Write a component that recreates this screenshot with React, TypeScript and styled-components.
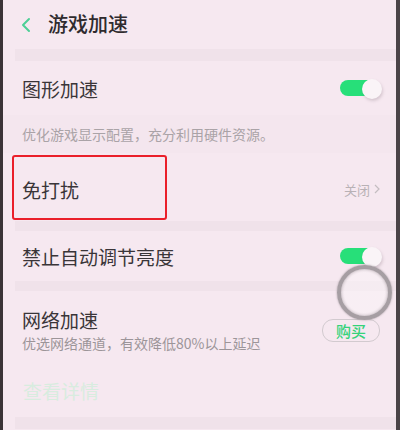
import React from "react";
import styled, { createGlobalStyle } from "styled-components";

const Global = createGlobalStyle`
  html, body { margin: 0; padding: 0; background: #f6e8f0; }
  body { font-family: "Noto Sans CJK SC", "Noto Sans", sans-serif; }
`;

const Screen = styled.div`
  position: relative;
  width: 400px;
  height: 430px;
  box-sizing: border-box;
  overflow: hidden;
  background: #f6e8f0;
  border-left: 3px solid #3b3337;
  border-right: 4px solid #4a4347;
  display: flex;
  flex-direction: column;
`;

const Header = styled.div`
  height: 49px;
  display: flex;
  align-items: center;
  gap: 16px;
  padding-left: 17px;
  box-sizing: border-box;
`;

const Title = styled.div`
  font-size: 20px;
  font-weight: 500;
  color: #2f2b2e;
  padding-bottom: 2px;
`;

const Band = styled.div<{ $h: number }>`
  height: ${(p) => p.$h}px;
  margin-left: 12px;
  background: #f0e2ea;
`;

const Row = styled.div<{ $h: number }>`
  height: ${(p) => p.$h}px;
  display: flex;
  align-items: center;
  justify-content: space-between;
  padding: 0 16px 0 19px;
  box-sizing: border-box;
`;

const Label = styled.div`
  font-size: 19px;
  color: #3a3538;
`;

const Desc = styled.div`
  height: 38px;
  display: flex;
  align-items: center;
  padding-left: 19px;
  font-size: 14px;
  color: #aaa3a7;
  background: #f4e6ee;
`;

const Toggle = styled.div`
  position: relative;
  width: 40px;
  height: 16px;
`;

const Track = styled.div`
  position: absolute;
  left: 0;
  top: 0;
  width: 30px;
  height: 16px;
  border-radius: 8px 0 0 8px;
  background: #27df79;
`;

const Knob = styled.div`
  position: absolute;
  right: -2px;
  top: -1px;
  width: 20px;
  height: 20px;
  border-radius: 50%;
  background: #faf4f7;
  box-shadow: 1px 2px 3px rgba(120, 100, 110, 0.25);
`;

const DndRow = styled.div`
  height: 68px;
  display: flex;
  align-items: center;
  justify-content: space-between;
  padding: 0 16px 0 9px;
  box-sizing: border-box;
`;

const Highlight = styled.div`
  width: 155px;
  height: 65px;
  box-sizing: border-box;
  border: 2px solid #ea1f2a;
  border-radius: 3px;
  display: flex;
  align-items: center;
  padding-left: 8px;
  padding-top: 4px;
`;

const Value = styled.div`
  font-size: 13px;
  color: #b8b1b5;
  display: flex;
  align-items: center;
  gap: 4px;
  padding-top: 4px;
`;

const NetRow = styled.div`
  height: 73px;
  display: flex;
  align-items: center;
  justify-content: space-between;
  padding: 0 16px 0 19px;
  box-sizing: border-box;
`;

const NetText = styled.div`
  display: flex;
  flex-direction: column;
  padding-top: 4px;
`;

const Sub = styled.div`
  font-size: 14px;
  color: #9c9599;
`;

const BuyButton = styled.div`
  width: 56px;
  height: 21px;
  border: 1px solid #d2cacf;
  border-radius: 11px;
  display: flex;
  align-items: center;
  justify-content: center;
  font-size: 15px;
  font-weight: 500;
  color: #35d27a;
  margin-top: 6px;
`;

const MoreLink = styled.div`
  height: 53px;
  display: flex;
  align-items: center;
  padding-left: 20px;
  font-size: 19px;
  color: #d8ecdf;
`;

const TouchRing = styled.div`
  position: absolute;
  left: 334px;
  top: 265px;
  width: 55px;
  height: 55px;
  box-sizing: border-box;
  border-radius: 50%;
  border: 4px solid #a69ea3;
  background: radial-gradient(circle, rgba(250, 245, 248, 0.5) 60%, rgba(200, 190, 196, 0.5) 100%);
  box-shadow: 0 0 2px rgba(80, 70, 75, 0.5), inset 0 0 3px rgba(90, 80, 85, 0.4);
`;

const Switch = () => (
  <Toggle>
    <Track />
    <Knob />
  </Toggle>
);

export default function App() {
  return (
    <>
      <Global />
      <Screen>
        <Header>
          <svg width="12" height="16" viewBox="0 0 12 16">
            <path d="M9 2 L3 8 L9 14" fill="none" stroke="#4dcf96" strokeWidth="2" strokeLinecap="round" strokeLinejoin="round" />
          </svg>
          <Title>游戏加速</Title>
        </Header>
        <Band $h={12} />
        <Row $h={54}>
          <Label>图形加速</Label>
          <Switch />
        </Row>
        <Desc>优化游戏显示配置，充分利用硬件资源。</Desc>
        <DndRow>
          <Highlight>
            <Label>免打扰</Label>
          </Highlight>
          <Value>
            关闭
            <svg width="6" height="10" viewBox="0 0 6 10">
              <path d="M1 1 L5 5 L1 9" fill="none" stroke="#c4bdc1" strokeWidth="1.2" />
            </svg>
          </Value>
        </DndRow>
        <Band $h={10} />
        <Row $h={50}>
          <Label>禁止自动调节亮度</Label>
          <Switch />
        </Row>
        <Band $h={10} />
        <NetRow>
          <NetText>
            <Label>网络加速</Label>
            <Sub>优选网络通道，有效降低80%以上延迟</Sub>
          </NetText>
          <BuyButton>购买</BuyButton>
        </NetRow>
        <MoreLink>查看详情</MoreLink>
        <Band $h={12} />
        <TouchRing />
      </Screen>
    </>
  );
}
